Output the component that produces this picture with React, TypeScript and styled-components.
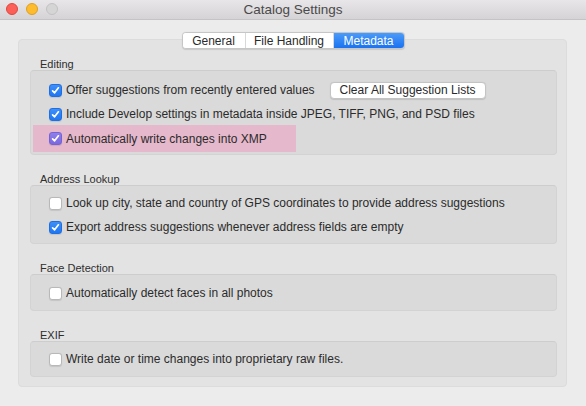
import React from 'react'
import styled, { createGlobalStyle } from 'styled-components'

const GlobalStyle = createGlobalStyle`
  html, body {
    margin: 0;
    padding: 0;
    background: #ececec;
  }
  body {
    font-family: "Liberation Sans", Arial, sans-serif;
    color: #2b2b2b;
    -webkit-font-smoothing: antialiased;
  }
  * {
    box-sizing: border-box;
  }
`

const Window = styled.div`
  width: 586px;
  height: 406px;
  background: #ececec;
  overflow: hidden;
`

const TitleBar = styled.div`
  position: relative;
  height: 20px;
  display: flex;
  align-items: center;
  justify-content: center;
  background: linear-gradient(#e8e6e8, #d5d3d5);
  border-bottom: 1px solid #c4c4c4;
`

const Lights = styled.div`
  position: absolute;
  left: 6px;
  top: 3px;
  display: flex;
  gap: 8px;
`

const Light = styled.span<{ $fill: string; $edge: string }>`
  width: 12px;
  height: 12px;
  border-radius: 50%;
  background: ${(p) => p.$fill};
  border: 1px solid ${(p) => p.$edge};
`

const Title = styled.div`
  font-size: 13.5px;
  color: #4a4a4a;
  line-height: 20px;
`

const Content = styled.div`
  padding: 12px 19px 0 18px;
  display: flex;
  flex-direction: column;
`

const Tabs = styled.div`
  position: relative;
  z-index: 1;
  align-self: center;
  display: flex;
  height: 17px;
  margin: 0 0 -10px 1px;
  border: 1px solid #c6c6c6;
  border-radius: 4px;
  background: #fff;
  box-shadow: 0 0.5px 1px rgba(0, 0, 0, 0.12);
  overflow: hidden;
`

const Tab = styled.div<{ $active?: boolean; $w: number }>`
  width: ${(p) => p.$w}px;
  display: flex;
  align-items: center;
  justify-content: center;
  font-size: 12px;
  color: ${(p) => (p.$active ? '#fff' : '#2a2a2a')};
  background: ${(p) =>
    p.$active ? 'linear-gradient(#4b9bf9, #1b72f0)' : '#fff'};
  border-left: 1px solid #d8d8d8;
  &:first-child {
    border-left: none;
  }
`

const Panel = styled.div`
  background: #e3e3e3;
  border: 1px solid #dcdcdc;
  border-radius: 4px;
  padding: 19px 9px 9px 11px;
  display: flex;
  flex-direction: column;
  gap: 19px;
`

const Section = styled.div`
  display: flex;
  flex-direction: column;
`

const SectionLabel = styled.div`
  font-size: 11px;
  line-height: 11px;
  height: 11px;
  padding-left: 10px;
  color: #2e2e2e;
`

const Group = styled.div<{ $top: number; $bottom: number }>`
  background: #dadada;
  border: 1px solid #d3d3d3;
  border-top-color: #cdcdcd;
  border-radius: 4px;
  padding: ${(p) => p.$top - 1}px 0 ${(p) => p.$bottom - 1}px;
  display: flex;
  flex-direction: column;
`

const Row = styled.div<{ $highlight?: boolean }>`
  display: flex;
  align-items: center;
  height: ${(p) => (p.$highlight ? 27 : 24)}px;
  margin-top: ${(p) => (p.$highlight ? -1 : 0)}px;
  padding-left: 18px;
  font-size: 12px;
  background: ${(p) =>
    p.$highlight
      ? 'linear-gradient(#e6b8cc, #e6b8cc) 2px 0 / 263px 100% no-repeat'
      : 'none'};
`

const Box = styled.span<{ $checked?: boolean; $tint?: boolean }>`
  width: 13px;
  height: 13px;
  flex: none;
  border-radius: 3px;
  margin-right: 4px;
  display: flex;
  align-items: center;
  justify-content: center;
  background: ${(p) =>
    !p.$checked
      ? '#fff'
      : p.$tint
      ? 'linear-gradient(#8f7fe9, #7a68df)'
      : 'linear-gradient(#3f8ff8, #1f76f2)'};
  border: 1px solid
    ${(p) => (!p.$checked ? '#b8b8b8' : p.$tint ? '#7563d6' : '#1f6fe0')};
  box-shadow: 0 0.5px 1px rgba(0, 0, 0, 0.1);
`

const Label = styled.span`
  white-space: nowrap;
`

const Button = styled.div`
  margin-left: 15px;
  height: 17px;
  width: 156px;
  display: flex;
  align-items: center;
  justify-content: center;
  font-size: 12px;
  color: #2a2a2a;
  background: #fff;
  border: 1px solid #c4c4c4;
  border-radius: 4px;
  box-shadow: 0 0.5px 1px rgba(0, 0, 0, 0.12);
`

const Check = ({ checked, tint }: { checked?: boolean; tint?: boolean }) => (
  <Box $checked={checked} $tint={tint}>
    {checked && (
      <svg width="9" height="9" viewBox="0 0 9 9">
        <path
          d="M1.6 4.8 L3.6 6.8 L7.4 1.8"
          fill="none"
          stroke="#fff"
          strokeWidth="1.7"
          strokeLinecap="round"
          strokeLinejoin="round"
        />
      </svg>
    )}
  </Box>
)

const Option = ({
  checked,
  highlight,
  children,
  extra,
}: {
  checked?: boolean
  highlight?: boolean
  children: React.ReactNode
  extra?: React.ReactNode
}) => (
  <Row $highlight={highlight}>
    <Check checked={checked} tint={highlight} />
    <Label>{children}</Label>
    {extra}
  </Row>
)

export default function App() {
  return (
    <>
      <GlobalStyle />
      <Window>
        <TitleBar>
          <Lights>
            <Light $fill="#fc5f57" $edge="#e1463f" />
            <Light $fill="#fdbc2e" $edge="#de9f22" />
            <Light $fill="#d6d5d6" $edge="#c3c2c3" />
          </Lights>
          <Title>Catalog Settings</Title>
        </TitleBar>
        <Content>
          <Tabs>
            <Tab $w={62}>General</Tab>
            <Tab $w={88}>File Handling</Tab>
            <Tab $w={71} $active>
              Metadata
            </Tab>
          </Tabs>
          <Panel>
            <Section>
              <SectionLabel>Editing</SectionLabel>
              <Group $top={8} $bottom={3}>
                <Option
                  checked
                  extra={<Button>Clear All Suggestion Lists</Button>}
                >
                  Offer suggestions from recently entered values
                </Option>
                <Option checked>
                  Include Develop settings in metadata inside JPEG, TIFF, PNG,
                  and PSD files
                </Option>
                <Option checked highlight>
                  Automatically write changes into XMP
                </Option>
              </Group>
            </Section>
            <Section>
              <SectionLabel>Address Lookup</SectionLabel>
              <Group $top={6} $bottom={5}>
                <Option>
                  Look up city, state and country of GPS coordinates to provide
                  address suggestions
                </Option>
                <Option checked>
                  Export address suggestions whenever address fields are empty
                </Option>
              </Group>
            </Section>
            <Section>
              <SectionLabel>Face Detection</SectionLabel>
              <Group $top={7} $bottom={6}>
                <Option>Automatically detect faces in all photos</Option>
              </Group>
            </Section>
            <Section>
              <SectionLabel>EXIF</SectionLabel>
              <Group $top={6} $bottom={6}>
                <Option>Write date or time changes into proprietary raw files.</Option>
              </Group>
            </Section>
          </Panel>
        </Content>
      </Window>
    </>
  )
}
